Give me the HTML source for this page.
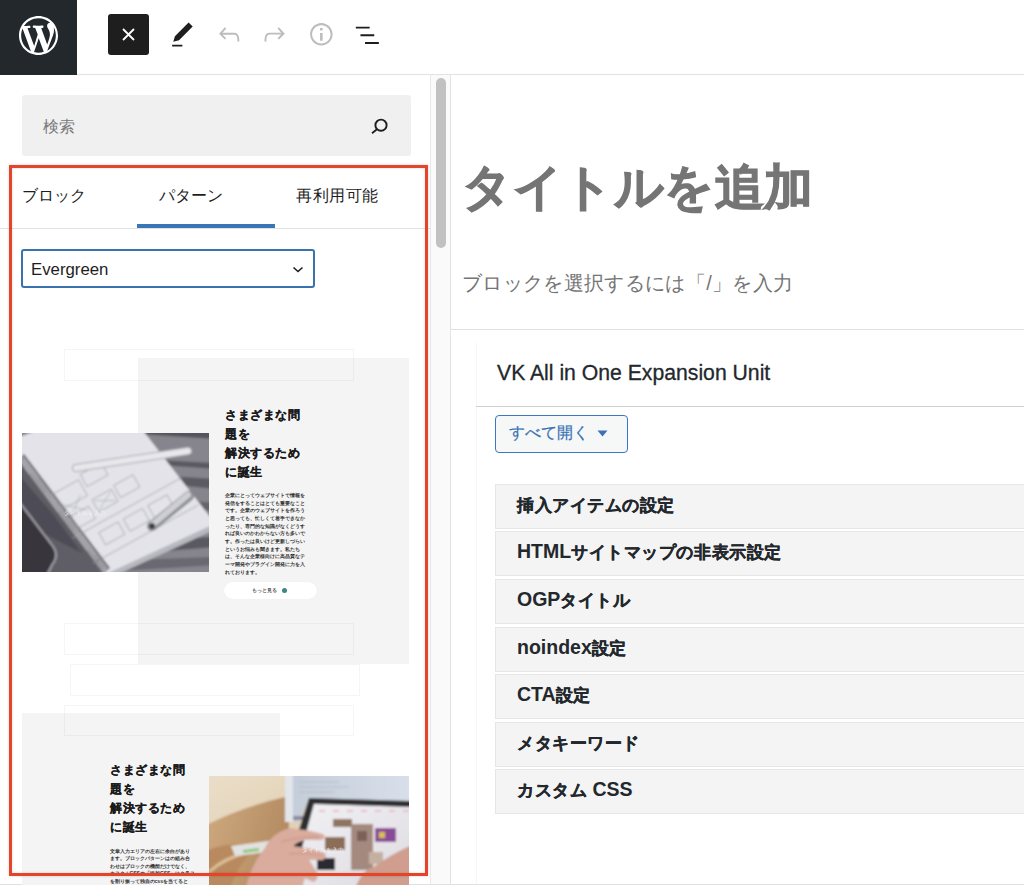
<!DOCTYPE html>
<html><head><meta charset="utf-8">
<style>
*{box-sizing:border-box}
html,body{margin:0;padding:0}
body{width:1024px;height:885px;position:relative;overflow:hidden;background:#fff;font-family:"Liberation Sans",sans-serif;color:#1e1e1e}
.a{position:absolute}
svg{display:block}
.it{font-size:17px;letter-spacing:.55px;line-height:24px;font-weight:bold;color:#23282d;white-space:nowrap;-webkit-text-stroke:0.35px #23282d}
.it b{font-size:19.5px;letter-spacing:0;line-height:0;-webkit-text-stroke:0}
</style></head><body>

<!-- header -->
<div class="a" style="left:0;top:0;width:1024px;height:75px;background:#fff;border-bottom:1px solid #e2e2e2"></div>
<div class="a" style="left:0;top:0;width:77px;height:74.5px;background:#23282d"></div>
<svg class="a" style="left:19px;top:16px" width="39" height="39" viewBox="0 0 20 20"><path fill="#fff" d="M20 10c0-5.51-4.49-10-10-10C4.48 0 0 4.49 0 10c0 5.52 4.48 10 10 10 5.51 0 10-4.48 10-10zM7.78 15.37L4.37 6.22c.55-.02 1.17-.08 1.17-.08.5-.06.44-1.13-.06-1.11 0 0-1.45.11-2.37.11-.18 0-.37 0-.58-.01C4.12 2.69 6.87 1.11 10 1.11c2.33 0 4.45.87 6.05 2.34-.68-.11-1.65.39-1.65 1.58 0 .74.45 1.36.9 2.1.35.61.55 1.36.55 2.46 0 1.49-1.4 5-1.4 5l-3.03-8.37c.54-.02.82-.17.82-.17.5-.05.44-1.25-.06-1.22 0 0-1.44.12-2.38.12-.87 0-2.33-.12-2.33-.12-.5-.03-.56 1.2-.06 1.22l.92.08 1.26 3.41zM17.41 10c.24-.64.74-1.87.43-4.25.7 1.29 1.05 2.71 1.05 4.25 0 3.29-1.73 6.24-4.4 7.78.97-2.59 1.94-5.2 2.92-7.78zM6.1 18.09C3.12 16.65 1.11 13.53 1.11 10c0-1.3.23-2.48.72-3.59l4.27 11.68zm4.02-6.7l2.58 6.98c-.86.29-1.76.45-2.7.45-.79 0-1.57-.11-2.29-.33.81-2.38 1.62-4.74 2.41-7.1z"/></svg>

<div class="a" style="left:108px;top:14px;width:41px;height:41px;background:#1e1e1e;border-radius:3px"></div>
<svg class="a" style="left:122px;top:28px" width="13" height="13" viewBox="0 0 13 13"><path d="M1 1L12 12M12 1L1 12" stroke="#fff" stroke-width="1.8"/></svg>

<svg class="a" style="left:167px;top:19.5px" width="30.7" height="30.7" viewBox="0 0 24 24"><path fill="#1e1e1e" d="M20.1 5.1L16.9 2 6.2 12.7l-1.3 4.4 4.5-1.3L20.1 5.1zM4 20.8h8v-1.5H4v1.5z"/></svg>
<svg class="a" style="left:213.5px;top:19.4px" width="30.7" height="30.7" viewBox="0 0 24 24"><path fill="#bdbdbd" d="M18.3 11.7c-.6-.6-1.4-.9-2.3-.9H6.7l2.9-3.3-1.1-1-4.5 5L8.5 16l1-1-2.7-2.7H16c.5 0 .9.2 1.3.5 1 1 1 3.4 1 4.5v.3h1.5v-.2c0-1.5 0-4.3-1.5-5.7z"/></svg>
<svg class="a" style="left:259.3px;top:19.4px" width="30.7" height="30.7" viewBox="0 0 24 24"><path fill="#bdbdbd" d="M15.6 6.5l-1.1 1 2.9 3.3H8c-.9 0-1.7.3-2.3.9-1.4 1.5-1.4 4.2-1.4 5.6v.2h1.5v-.3c0-1.1 0-3.5 1-4.5.3-.3.7-.5 1.3-.5h9.2L14.5 15l1.1 1.1 4.6-4.6-4.6-5z"/></svg>
<svg class="a" style="left:305.6px;top:19.2px" width="30.7" height="30.7" viewBox="0 0 24 24"><path fill="#bdbdbd" d="M12 3.2c-4.8 0-8.8 3.9-8.8 8.8 0 4.8 3.9 8.8 8.8 8.8 4.8 0 8.8-3.9 8.8-8.8 0-4.8-4-8.8-8.8-8.8zm0 16c-4 0-7.2-3.3-7.2-7.2C4.8 8 8 4.8 12 4.8s7.2 3.3 7.2 7.2c0 4-3.2 7.2-7.2 7.2zM11 17h2v-6h-2v6zm0-8h2V7h-2v2z"/></svg>
<svg class="a" style="left:352px;top:19.7px" width="30.7" height="30.7" viewBox="0 0 24 24"><path fill="#1e1e1e" d="M13.8 5.2H3v1.5h10.8V5.2zm-3.6 12v1.5H21v-1.5H10.2zm7.2-6H6.6v1.5h10.8v-1.5z"/></svg>

<!-- left sidebar -->
<div class="a" style="left:22px;top:95px;width:389px;height:61px;background:#f0f0f0;border-radius:3px"></div>
<div class="a" style="left:43px;top:115.5px;font-size:16px;color:#7a7a7a;line-height:22px">検索</div>
<svg class="a" style="left:370px;top:117px" width="19" height="19" viewBox="0 0 19 19"><circle cx="11" cy="8.2" r="5.6" fill="none" stroke="#1e1e1e" stroke-width="1.9"/><path d="M7 12.2L2 16.2" stroke="#1e1e1e" stroke-width="1.9"/></svg>

<!-- tabs -->
<div class="a" style="left:0;top:228px;width:430px;height:1px;background:#e2e2e2"></div>
<div class="a" style="left:22px;top:185px;font-size:16px;line-height:22px;color:#1e1e1e">ブロック</div>
<div class="a" style="left:159px;top:185px;font-size:16px;line-height:22px;color:#1e1e1e">パターン</div>
<div class="a" style="left:296px;top:185px;font-size:16px;letter-spacing:0.6px;line-height:22px;color:#1e1e1e">再利用可能</div>
<div class="a" style="left:137px;top:224px;width:138px;height:4px;background:#3a76b5"></div>

<!-- select -->
<div class="a" style="left:21px;top:249px;width:294px;height:39px;border:2px solid #3a72ad;border-radius:3px;background:#fff"></div>
<div class="a" style="left:31px;top:260px;font-size:16.8px;line-height:20px;color:#1e1e1e">Evergreen</div>
<svg class="a" style="left:291px;top:265px" width="14" height="9" viewBox="0 0 14 9"><path d="M2.5 2.5L7 6.5L11.5 2.5" fill="none" stroke="#1e1e1e" stroke-width="1.6"/></svg>

<!-- scrollbar -->
<div class="a" style="left:430px;top:75px;width:21px;height:810px;background:#fafafa;border-left:1px solid #e8e8e8;border-right:1px solid #e3e3e3"></div>
<div class="a" style="left:436px;top:78px;width:10px;height:170px;background:#c1c1c1;border-radius:5px"></div>

<!-- right editor -->
<div class="a" style="left:462px;top:154px;font-size:49px;letter-spacing:0.5px;font-weight:bold;color:#757575;-webkit-text-stroke:1.1px #757575;line-height:66px;white-space:nowrap">タイトルを追加</div>
<div class="a" style="left:462px;top:270px;font-size:20px;letter-spacing:0.35px;color:#757575;line-height:26px;white-space:nowrap">ブロックを選択するには「/」を入力</div>
<div class="a" style="left:451px;top:329px;width:573px;height:1px;background:#e0e0e0"></div>

<div class="a" style="left:476px;top:343px;width:1px;height:541px;background:#f6f6f6"></div>
<div class="a" style="left:497px;top:360px;font-size:21.2px;color:#23282d;-webkit-text-stroke:0.3px #23282d;line-height:26px;white-space:nowrap">VK All in One Expansion Unit</div>
<div class="a" style="left:476px;top:406px;width:548px;height:1px;background:#cfcfcf"></div>

<div class="a" style="left:495px;top:415px;width:133px;height:38px;border:1.5px solid #3a78c0;border-radius:4px;background:#f6f7f7"></div>
<div class="a" style="left:509px;top:423px;font-size:16px;line-height:20px;color:#3a72b5;-webkit-text-stroke:0.2px #3a72b5;white-space:nowrap">すべて開く</div>
<svg class="a" style="left:597px;top:430px" width="11" height="7" viewBox="0 0 11 7"><path d="M0.5 0.5h10L5.5 6.5z" fill="#3a72b5"/></svg>



<div class="a" style="left:495px;top:483.8px;width:540px;height:45px;background:#f4f4f4;border:1px solid #e6e6e6"></div>
<div class="a it" style="left:517px;top:493.8px">挿入アイテムの設定</div>
<div class="a" style="left:495px;top:531.4px;width:540px;height:45px;background:#f4f4f4;border:1px solid #e6e6e6"></div>
<div class="a it" style="left:517px;top:541.4px"><b>HTML</b>サイトマップの非表示設定</div>
<div class="a" style="left:495px;top:578.9px;width:540px;height:45px;background:#f4f4f4;border:1px solid #e6e6e6"></div>
<div class="a it" style="left:517px;top:588.9px"><b>OGP</b>タイトル</div>
<div class="a" style="left:495px;top:626.5px;width:540px;height:45px;background:#f4f4f4;border:1px solid #e6e6e6"></div>
<div class="a it" style="left:517px;top:636.5px"><b>noindex</b>設定</div>
<div class="a" style="left:495px;top:674.1px;width:540px;height:45px;background:#f4f4f4;border:1px solid #e6e6e6"></div>
<div class="a it" style="left:517px;top:684.1px"><b>CTA</b>設定</div>
<div class="a" style="left:495px;top:721.6px;width:540px;height:45px;background:#f4f4f4;border:1px solid #e6e6e6"></div>
<div class="a it" style="left:517px;top:731.6px">メタキーワード</div>
<div class="a" style="left:495px;top:769.2px;width:540px;height:45px;background:#f4f4f4;border:1px solid #e6e6e6"></div>
<div class="a it" style="left:517px;top:779.2px">カスタム <b>CSS</b></div>
<div class="a" style="left:0;top:884px;width:1024px;height:1px;background:#e0e0e0"></div>

<div class="a" style="left:64px;top:349px;width:290px;height:32px;border:1px solid rgba(0,0,0,0.04);z-index:2"></div>
<div class="a" style="left:138px;top:358px;width:271px;height:306px;background:#f4f4f4"></div>
<svg class="a" style="left:22px;top:433px" width="187" height="139" viewBox="0 0 187 139">
<defs><filter id="bl" x="-0.05" y="-0.05" width="1.1" height="1.1"><feGaussianBlur stdDeviation="0.8"/></filter><clipPath id="c1"><rect width="187" height="139"/></clipPath></defs>
<g clip-path="url(#c1)"><rect width="187" height="139" fill="#84828a"/><g filter="url(#bl)">
<rect x="-5" y="-5" width="197" height="149" fill="#86848c"/>
<path d="M100 -5L192 -5L192 6L100 0z" fill="#55535b"/>
<path d="M120 26L192 30L192 36L124 31z" fill="#5a5860"/>
<path d="M130 42L192 46L192 56L138 50z" fill="#5c5a62"/>
<path d="M150 66L192 70L192 78L160 74z" fill="#66646c"/>
<path d="M100 108L192 104L192 114L96 122z" fill="#5a5860"/>
<path d="M80 128L192 124L192 132L80 139z" fill="#6a6870"/>
<path d="M-5 24L20 55L50 95L84 144L-5 144z" fill="#5f5d65"/>
<path d="M-5 40L30 80L60 120L20 100L-5 80z" fill="#4e4c54"/>
<path d="M-5 5L21 -5L119 -5L192 89L192 94L88 141L80 141L-5 22z" fill="#e3e3e9"/>
<path d="M192 91L192 97L90 144L84 141z" fill="#b8b8c0"/>
<path d="M-2 24L84 138" stroke="#5a5860" stroke-width="10"/>
<path d="M-2 24L84 138" stroke="#d4d4da" stroke-width="7" stroke-dasharray="1.4 1.4"/>
<path d="M-5 66L30 112Q38 122 30 132L24 144L-5 144z" fill="#38363e" stroke="#a6a4ac" stroke-width="1.8"/>
<g transform="translate(105 68) rotate(-29)" fill="none" stroke="#9a9aa2" stroke-width="0.7">
<rect x="-62" y="-42" width="30" height="18"/><rect x="-28" y="-46" width="24" height="14"/>
<rect x="-56" y="-14" width="20" height="14"/><rect x="-30" y="-18" width="22" height="14"/><rect x="-4" y="-20" width="22" height="14"/>
<rect x="-40" y="14" width="22" height="14"/><rect x="-12" y="14" width="22" height="14"/><rect x="16" y="14" width="22" height="14"/>
<path d="M-66 6L60 6M-60 38L60 38"/>
<path d="M-60 -10L-38 -28M-58 -28L-40 -12M-28 -16L-10 -6M-28 -6L-10 -16" stroke-width="0.5"/>
</g>
<path d="M54 35L166 18" stroke="#a8a8b0" stroke-width="8" stroke-linecap="round"/>
<path d="M54 35L166 18" stroke="#e8e8ec" stroke-width="6" stroke-linecap="round"/>
<path d="M130 93L167 63" stroke="#8e8e96" stroke-width="10" stroke-linecap="round"/>
<path d="M130 92L166 62" stroke="#cfcfd5" stroke-width="6" stroke-linecap="round"/>
<circle cx="130" cy="93" r="3" fill="#3a3a40"/>
</g><text x="42" y="82" font-size="6" fill="#fff" fill-opacity="0.7" font-family="Liberation Sans">タイトルを入力</text>
</g></svg>
<div class="a" style="left:225px;top:405.5px;font-size:12px;letter-spacing:0.5px;line-height:19px;font-weight:bold;color:#1a1a1a;-webkit-text-stroke:0.2px #1a1a1a;white-space:nowrap">さまざまな問</div>
<div class="a" style="left:225px;top:424.5px;font-size:12px;letter-spacing:0.5px;line-height:19px;font-weight:bold;color:#1a1a1a;-webkit-text-stroke:0.2px #1a1a1a;white-space:nowrap">題を</div>
<div class="a" style="left:225px;top:443.5px;font-size:12px;letter-spacing:0.5px;line-height:19px;font-weight:bold;color:#1a1a1a;-webkit-text-stroke:0.2px #1a1a1a;white-space:nowrap">解決するため</div>
<div class="a" style="left:225px;top:462.5px;font-size:12px;letter-spacing:0.5px;line-height:19px;font-weight:bold;color:#1a1a1a;-webkit-text-stroke:0.2px #1a1a1a;white-space:nowrap">に誕生</div>
<div class="a" style="left:224.5px;top:491.8px;font-size:5.1px;line-height:7.7px;color:#333;font-weight:bold;white-space:nowrap">企業にとってウェブサイトで情報を<br>発信をすることはとても重要なこと<br>です。企業のウェブサイトを作ろう<br>と思っても、忙しくて着手できなか<br>ったり、専門的な知識がなくどうす<br>れば良いのかわからない方も多いで<br>す。作ったは良いけど更新しづらい<br>というお悩みも聞きます。私たち<br>は、そんな企業様向けに高品質なテ<br>ーマ開発やプラグイン開発に力を入<br>れております。</div>
<div class="a" style="left:224px;top:582px;width:93px;height:17px;background:#fff;border-radius:9px;box-shadow:0 0 1px #e6e6e6"></div>
<div class="a" style="left:252px;top:587px;font-size:5px;line-height:7px;color:#555;font-weight:bold;white-space:nowrap">もっと見る</div>
<div class="a" style="left:282px;top:588px;width:5px;height:5px;border-radius:50%;background:#3f8580"></div>
<div class="a" style="left:64px;top:623px;width:290px;height:32px;border:1px solid rgba(0,0,0,0.04);z-index:2"></div>
<div class="a" style="left:70px;top:664px;width:290px;height:32px;border:1px solid rgba(0,0,0,0.04);z-index:2"></div>
<div class="a" style="left:64px;top:705px;width:290px;height:31px;border:1px solid rgba(0,0,0,0.04);z-index:2"></div>
<div class="a" style="left:22px;top:713px;width:258px;height:172px;background:#f4f4f4"></div>
<div class="a" style="left:110px;top:760.5px;font-size:12px;letter-spacing:0.5px;line-height:19px;font-weight:bold;color:#1a1a1a;-webkit-text-stroke:0.2px #1a1a1a;white-space:nowrap">さまざまな問</div>
<div class="a" style="left:110px;top:779.5px;font-size:12px;letter-spacing:0.5px;line-height:19px;font-weight:bold;color:#1a1a1a;-webkit-text-stroke:0.2px #1a1a1a;white-space:nowrap">題を</div>
<div class="a" style="left:110px;top:798.5px;font-size:12px;letter-spacing:0.5px;line-height:19px;font-weight:bold;color:#1a1a1a;-webkit-text-stroke:0.2px #1a1a1a;white-space:nowrap">解決するため</div>
<div class="a" style="left:110px;top:817.5px;font-size:12px;letter-spacing:0.5px;line-height:19px;font-weight:bold;color:#1a1a1a;-webkit-text-stroke:0.2px #1a1a1a;white-space:nowrap">に誕生</div>
<div class="a" style="left:109.5px;top:847.6px;font-size:5.1px;line-height:7.5px;color:#333;font-weight:bold;white-space:nowrap">文章入力エリアの左右に余白があり<br>ます。ブロックパターンはの組み合<br>わせはブロックの機能だけでなく、<br>カスタムCSSの「追加CSS」にクラス<br>を割り振って独自のcssを当てると</div>
<svg class="a" style="left:209px;top:776px" width="200" height="109" viewBox="0 0 200 109">
<defs><clipPath id="c2"><rect width="200" height="109"/></clipPath>
<linearGradient id="wall" x1="0" y1="0" x2="1" y2="1"><stop offset="0" stop-color="#ebdfca"/><stop offset="1" stop-color="#d6bf9c"/></linearGradient>
<linearGradient id="tbl" x1="0" y1="0" x2="1" y2="0.3"><stop offset="0" stop-color="#cfab80"/><stop offset="1" stop-color="#b48b62"/></linearGradient>
<linearGradient id="scr" x1="0" y1="0" x2="1" y2="1"><stop offset="0" stop-color="#f2f1f4"/><stop offset="1" stop-color="#dcdae0"/></linearGradient>
<linearGradient id="lap" x1="0" y1="0" x2="1" y2="0"><stop offset="0" stop-color="#c3ccd8"/><stop offset="1" stop-color="#d9e0ea"/></linearGradient></defs>
<g clip-path="url(#c2)"><rect width="200" height="109" fill="#d9c6a6"/><g filter="url(#bl)">
<rect x="-5" y="-5" width="210" height="119" fill="url(#wall)"/>
<path d="M-5 50Q35 30 80 20L80 115L-5 115z" fill="url(#tbl)"/>
<path d="M-5 76Q20 64 50 70Q30 85 20 115L-5 115z" fill="#b98a5e"/>
<path d="M0 96Q15 82 40 76" stroke="#dcc09a" stroke-width="3" fill="none"/>
<path d="M76 -5L205 -5L205 26L100 23L90 46L76 46z" fill="url(#lap)"/>
<path d="M90 6H130M90 11H140M90 16H125" stroke="#b0b8c4" stroke-width="0.8"/>
<path d="M76 -5L84 -5L84 46L76 46z" fill="#e2e6ea"/>
<path d="M84 40L96 40L96 44L84 44z" fill="#8c8aa0"/>
<path d="M22 70L66 64L68 75L26 80z" fill="#e2e2e2"/>
<path d="M34 74L50 72L50 75L34 77z" fill="#8cc878"/>
<path d="M100 22L205 25L205 115L70 115L76 98z" fill="#2e2e33"/>
<path d="M105 28L205 31L205 115L81 115z" fill="url(#scr)"/>
<path d="M110 35H200" stroke="#e8b0c0" stroke-width="1.5" stroke-dasharray="6 8"/>
<rect x="124" y="43" width="19" height="8" fill="#8f7560"/>
<rect x="142" y="48" width="22" height="46" fill="#a48a7e"/>
<rect x="148" y="55" width="10" height="10" fill="#7a6058"/>
<rect x="166" y="52" width="21" height="14" fill="#8a4c96"/>
<rect x="170" y="56" width="6" height="6" fill="#d8c050"/>
<rect x="116" y="61" width="20" height="13" fill="#8c6e58"/>
<rect x="108" y="82" width="18" height="12" fill="#2c2a30"/>
<rect x="160" y="76" width="14" height="12" fill="#c4b0a0"/>
<path d="M36 115Q42 88 56 72Q62 58 80 52Q100 54 114 58Q118 62 112 64L96 64Q88 66 84 70Q100 72 114 76Q120 80 114 84L100 84L108 96Q110 104 104 106L96 102L92 115z" fill="#d9ac9e"/>
<path d="M72 66Q92 60 110 61M80 78Q98 76 112 80" stroke="#bf8f80" stroke-width="0.8" fill="none"/>
<path d="M146 115Q150 96 166 90Q182 78 205 68L205 115z" fill="#cf9e8e"/>
</g><text x="93" y="76" font-size="6" fill="#fff" fill-opacity="0.8" font-family="Liberation Sans">タイトルを入力</text>
</g></svg>

<!-- red annotation -->
<div class="a" style="left:9px;top:165px;width:419px;height:711px;border:3px solid #e5432a;box-shadow:0 0 2.5px rgba(0,0,0,0.18),inset 0 0 2.5px rgba(0,0,0,0.18)"></div>

</body></html>
